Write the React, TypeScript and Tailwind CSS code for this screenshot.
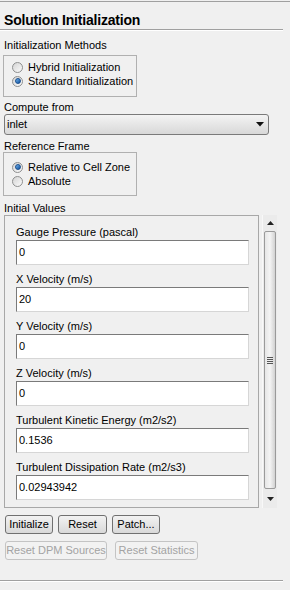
import React from "react";

function Radio({ checked, label }: { checked?: boolean; label: string }) {
  return (
    <div className="flex items-center h-[14px]">
      <div className="w-[11px] h-[11px] rounded-full border border-[#8e8f8f] bg-gradient-to-br from-[#d4d4d4] to-[#fbfbfb] flex items-center justify-center">
        {checked && (
          <div className="w-[6px] h-[6px] rounded-full bg-gradient-to-br from-[#6fb3ec] to-[#0d4e9c] border border-[#1a4f8f]" />
        )}
      </div>
      <span className="ml-[5px] leading-[13px]">{label}</span>
    </div>
  );
}

function Field({ label, value }: { label: string; value: string }) {
  return (
    <div className="mb-[8px] last:mb-0">
      <div className="h-[14px] leading-[13px]">{label}</div>
      <div className="w-[233px] h-[25px] bg-white border border-t-[#7a7a7a] border-l-[#7a7a7a] border-r-[#d6d6d6] border-b-[#d6d6d6] pl-[2px] pt-[5px] leading-[13px]">
        {value}
      </div>
    </div>
  );
}

function Btn({ children, disabled, w }: { children: React.ReactNode; disabled?: boolean; w: string }) {
  return (
    <div
      className={
        "h-[19px] rounded-[3px] border flex items-center justify-center leading-[13px] " +
        w +
        (disabled
          ? " border-[#c4c4c4] text-[#a3a3a3] bg-[#f2f2f2]"
          : " border-[#707070] bg-gradient-to-b from-[#f2f2f2] to-[#d9d9d9] text-black")
      }
    >
      {children}
    </div>
  );
}

export default function App() {
  return (
    <div className="w-[290px] h-[590px] bg-[#f0f0f0] text-[11px] text-black font-['Liberation_Sans',Arial,sans-serif] overflow-hidden">
      <div className="h-px" />
      <div className="h-px bg-[#a0a0a0]" />
      <div className="mt-[10px] pl-[4px] h-[17px] leading-[17px] text-[14px] font-bold tracking-[-0.2px]">
        Solution Initialization
      </div>
      <div className="w-[283px] h-[2px] border-t border-[#a0a0a0] border-b border-b-white" />

      <div className="pl-[4px] mt-[8px] h-[13px] leading-[13px]">Initialization Methods</div>
      <div className="ml-[3px] mt-[3px] w-[134px] h-[42px] border border-[#b0b0b0] pl-[8px] pt-[4px]">
        <Radio label="Hybrid  Initialization" />
        <Radio checked label="Standard Initialization" />
      </div>

      <div className="pl-[4px] mt-[4px] h-[13px] leading-[13px]">Compute from</div>
      <div className="ml-[4px] w-[265px] h-[21px] rounded-[3px] border border-[#7a7a7a] bg-gradient-to-b from-[#f4f4f4] to-[#d8d8d8] flex items-center justify-between pl-[2px] pr-[4px]">
        <span className="leading-[13px]">inlet</span>
        <svg width="8" height="5" viewBox="0 0 8 5">
          <path d="M0 0 H8 L4 4.5 Z" fill="#111" />
        </svg>
      </div>

      <div className="pl-[4px] mt-[5px] h-[12px] leading-[13px]">Reference Frame</div>
      <div className="ml-[3px] w-[134px] h-[44px] border border-[#b0b0b0] pl-[8px] pt-[7px]">
        <Radio checked label="Relative to Cell Zone" />
        <Radio label="Absolute" />
      </div>

      <div className="pl-[4px] mt-[6px] h-[13px] leading-[13px]">Initial Values</div>
      <div className="flex">
        <div className="ml-[4px] w-[255px] h-[293px] border border-[#a8a8a8] pl-[11px] pt-[10px]">
          <Field label="Gauge Pressure (pascal)" value="0" />
          <Field label="X Velocity (m/s)" value="20" />
          <Field label="Y Velocity (m/s)" value="0" />
          <Field label="Z Velocity (m/s)" value="0" />
          <Field label="Turbulent Kinetic Energy (m2/s2)" value="0.1536" />
          <Field label="Turbulent Dissipation Rate (m2/s3)" value="0.02943942" />
        </div>
        <div className="ml-[3px] w-[15px] h-[293px] bg-[#ebebeb] border-l border-[#f8f8f8] flex flex-col">
          <div className="h-[16px] flex items-center justify-center">
            <svg width="7" height="4" viewBox="0 0 7 4">
              <path d="M3.5 0 L7 4 H0 Z" fill="#222" />
            </svg>
          </div>
          <div className="mx-px h-[258px] rounded-[2px] border border-[#9a9a9a] bg-gradient-to-r from-[#e6e6e6] via-[#f4f4f4] to-[#d2d2d2] flex items-center justify-center">
            <div className="flex flex-col gap-[1px]">
              <div className="w-[6px] h-px bg-[#555]" />
              <div className="w-[6px] h-px bg-[#555]" />
              <div className="w-[6px] h-px bg-[#555]" />
              <div className="w-[6px] h-px bg-[#555]" />
            </div>
          </div>
          <div className="flex-1 flex items-center justify-center">
            <svg width="7" height="4" viewBox="0 0 7 4">
              <path d="M0 0 H7 L3.5 4 Z" fill="#222" />
            </svg>
          </div>
        </div>
      </div>

      <div className="flex gap-[5px] ml-[5px] mt-[7px]">
        <Btn w="w-[48px]">Initialize</Btn>
        <Btn w="w-[49px]">Reset</Btn>
        <Btn w="w-[48px]">Patch...</Btn>
      </div>
      <div className="flex gap-[8px] ml-[5px] mt-[7px]">
        <Btn disabled w="w-[102px]">Reset DPM Sources</Btn>
        <Btn disabled w="w-[83px]">Reset Statistics</Btn>
      </div>
      <div className="mt-[20px] w-[283px] h-[2px] border-t border-[#a0a0a0] border-b border-b-white" />
    </div>
  );
}
